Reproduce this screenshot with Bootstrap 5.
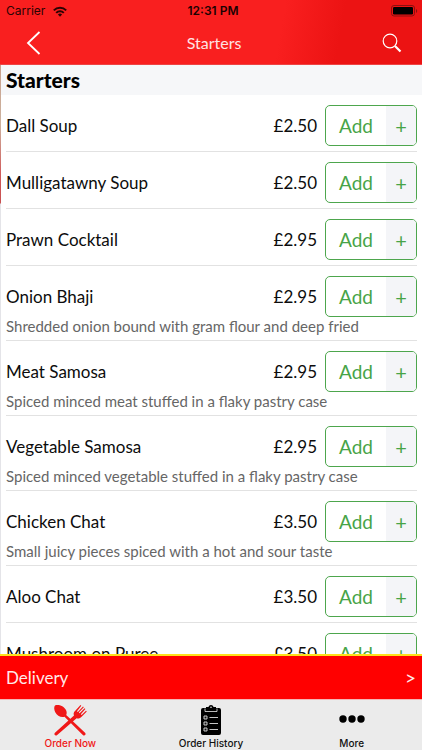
<!DOCTYPE html>
<html lang="en">
<head>
<meta charset="utf-8">
<meta name="viewport" content="width=device-width, initial-scale=1">
<title>Starters</title>
<link rel="stylesheet" href="https://cdn.jsdelivr.net/npm/bootstrap@5.3.0/dist/css/bootstrap.min.css">
<style>
body { font-family: Lato, "Liberation Sans", sans-serif; color: #0c0c0c; line-height: 20px; }
.top-bar { background: linear-gradient(100deg, #f91f1f 0%, #f91f1f 66%, #ec1313 80%, #ec1313 100%); border-bottom: 1px solid #e44; height: 65px; }
.status { display: grid; grid-template-columns: 1fr auto 1fr; font: 12px/22px Inter, sans-serif; color: #2a0303; }
.status > :first-child { padding-left: 0; margin-left: -2px; }
.status strong { font-weight: 600; color: #1c0202; }
.title-row { display: grid; grid-template-columns: 1fr auto 1fr; align-items: center; height: 42px; }
.title-row h1 { font-size: 16px; line-height: 20px; font-weight: 400; color: #ffe3e3; padding-left: 6px; }
.icon-btn { border: 0; background: none; padding: 0; line-height: 0; }
.menu { min-height: 0; overflow-y: auto; scrollbar-width: none; border-left: 1px solid; border-image: linear-gradient(#c9a08c 0, #cdb3a0 60px, #d05a5a 110px, #c85050 138px, #e4e4e8 140px, #e4e4e8 100%) 1; }
.menu::-webkit-scrollbar { display: none; }
.menu h2 { font-size: 21px; line-height: 30px; font-weight: 900; color: #000; background: #f6f7f9; padding-left: 5px; }
.dish { margin-left: 5px; margin-right: 5px; padding-top: 10px; border-bottom: 1px solid #e2e2e2; min-height: 57px; }
.dish-name, .price { font-size: 17px; }
.dish p { font-size: 15px; line-height: 18px; color: #666; padding-bottom: 5px; }
.add-btn { width: 92px; height: 41px; border: 1px solid #4da64d; border-radius: 5px; background: #fff; color: #47a447; padding: 0; overflow: hidden; font-size: 19px; }
.add-btn .plus { width: 30px; background: #f4f5f8; font-size: 20px; }
.delivery { background: #f00; border-top: 2px solid #ffe01a; color: #ffe9e9; height: 45px; font-size: 17px; padding: 0 6px; }
.delivery:hover { color: #fff; }
.delivery .arrow { font-size: 19px; }
.tabs { background: #ebebeb; border-top: 1px solid #f5b5b5; height: 51px; }
.tabs a { color: #111; font: 500 10px/12px Inter, sans-serif; padding-top: 4px; }
.tabs a.current { color: #f01818; }
</style>
<script src="https://cdn.jsdelivr.net/npm/bootstrap@5.3.0/dist/js/bootstrap.bundle.min.js"></script>
</head>
<body class="d-flex flex-column vh-100 overflow-hidden">
<header class="top-bar flex-shrink-0">
  <div class="status ps-2 pe-1">
    <span class="d-flex align-items-center gap-2">Carrier
      <svg width="14" height="11" viewBox="0 0 14 11" fill="none" stroke="#2a0303" stroke-width="2" aria-hidden="true"><path d="M.8 4.400a8.800 8.800 0 0 1 12.400 0M3.200 6.900a5.400 5.400 0 0 1 7.600 0"/><path d="M7 10.700 4.900 8.600a3 3 0 0 1 4.200 0z" fill="#2a0303" stroke="none"/></svg>
    </span>
    <strong>12:31 PM</strong>
    <span class="d-flex align-items-center justify-content-end">
      <svg width="27" height="12" viewBox="0 0 27 12" aria-hidden="true"><rect x=".5" y=".5" width="23" height="10.500" rx="2.500" fill="none" stroke="#8b1010"/><rect x="2" y="2" width="20" height="7.500" rx="1.200" fill="#000"/><path d="M25 4v4c1.600-.6 1.600-3.400 0-4z" fill="#8b1010"/></svg>
    </span>
  </div>
  <div class="title-row">
    <button class="icon-btn text-start ps-4" type="button" aria-label="Back"><svg width="18" height="26" viewBox="0 0 18 26" fill="none" stroke="#fff" stroke-width="1.800"><path d="M15.500 2 4 13l11.500 11"/></svg></button>
    <h1 class="m-0">Starters</h1>
    <button class="icon-btn text-end pe-3 me-1" type="button" aria-label="Search"><svg width="20" height="20" viewBox="0 0 20 20" fill="none" stroke="#fff"><circle cx="8" cy="8" r="6.800" stroke-width="1.200"/><path d="m13 13 5.500 5.500" stroke-width="2.200"/></svg></button>
  </div>
</header>
<main class="menu flex-grow-1">
  <h2 class="m-0">Starters</h2>
  <div class="dish"><div class="d-flex align-items-center"><span class="dish-name flex-grow-1">Dall Soup</span><span class="price me-2">£2.50</span><button class="add-btn d-flex" type="button"><span class="flex-grow-1 align-self-center">Add</span><span class="plus align-self-stretch d-flex align-items-center justify-content-center">+</span></button></div></div>
  <div class="dish"><div class="d-flex align-items-center"><span class="dish-name flex-grow-1">Mulligatawny Soup</span><span class="price me-2">£2.50</span><button class="add-btn d-flex" type="button"><span class="flex-grow-1 align-self-center">Add</span><span class="plus align-self-stretch d-flex align-items-center justify-content-center">+</span></button></div></div>
  <div class="dish"><div class="d-flex align-items-center"><span class="dish-name flex-grow-1">Prawn Cocktail</span><span class="price me-2">£2.95</span><button class="add-btn d-flex" type="button"><span class="flex-grow-1 align-self-center">Add</span><span class="plus align-self-stretch d-flex align-items-center justify-content-center">+</span></button></div></div>
  <div class="dish"><div class="d-flex align-items-center"><span class="dish-name flex-grow-1">Onion Bhaji</span><span class="price me-2">£2.95</span><button class="add-btn d-flex" type="button"><span class="flex-grow-1 align-self-center">Add</span><span class="plus align-self-stretch d-flex align-items-center justify-content-center">+</span></button></div><p class="m-0">Shredded onion bound with gram flour and deep fried</p></div>
  <div class="dish"><div class="d-flex align-items-center"><span class="dish-name flex-grow-1">Meat Samosa</span><span class="price me-2">£2.95</span><button class="add-btn d-flex" type="button"><span class="flex-grow-1 align-self-center">Add</span><span class="plus align-self-stretch d-flex align-items-center justify-content-center">+</span></button></div><p class="m-0">Spiced minced meat stuffed in a flaky pastry case</p></div>
  <div class="dish"><div class="d-flex align-items-center"><span class="dish-name flex-grow-1">Vegetable Samosa</span><span class="price me-2">£2.95</span><button class="add-btn d-flex" type="button"><span class="flex-grow-1 align-self-center">Add</span><span class="plus align-self-stretch d-flex align-items-center justify-content-center">+</span></button></div><p class="m-0">Spiced minced vegetable stuffed in a flaky pastry case</p></div>
  <div class="dish"><div class="d-flex align-items-center"><span class="dish-name flex-grow-1">Chicken Chat</span><span class="price me-2">£3.50</span><button class="add-btn d-flex" type="button"><span class="flex-grow-1 align-self-center">Add</span><span class="plus align-self-stretch d-flex align-items-center justify-content-center">+</span></button></div><p class="m-0">Small juicy pieces spiced with a hot and sour taste</p></div>
  <div class="dish"><div class="d-flex align-items-center"><span class="dish-name flex-grow-1">Aloo Chat</span><span class="price me-2">£3.50</span><button class="add-btn d-flex" type="button"><span class="flex-grow-1 align-self-center">Add</span><span class="plus align-self-stretch d-flex align-items-center justify-content-center">+</span></button></div></div>
  <div class="dish"><div class="d-flex align-items-center"><span class="dish-name flex-grow-1">Mushroom on Puree</span><span class="price me-2">£3.50</span><button class="add-btn d-flex" type="button"><span class="flex-grow-1 align-self-center">Add</span><span class="plus align-self-stretch d-flex align-items-center justify-content-center">+</span></button></div></div>
</main>
<a href="#" class="delivery flex-shrink-0 d-flex align-items-center justify-content-between text-decoration-none"><span>Delivery</span><span class="arrow">&gt;</span></a>
<nav class="tabs flex-shrink-0 row g-0 text-center">
  <a href="#" class="col current text-decoration-none d-flex flex-column align-items-center">
    <svg width="34" height="33" viewBox="0 0 34 33" aria-hidden="true"><g fill="#f01818"><path d="M2 1.500C5 0 11 2 13 6c1 2 .8 3.700.2 5L32.300 29c1 1.600-.8 3.200-2.200 2.200L11.500 12.700C8 14 4 11.500 2.400 8.500 1 5.800.8 3 2 1.500z"/><path d="M1.700 29 21 11.500c-1-2 0-3.500 1-4.500l5.500-6 .8.700-4.300 5.500.8.700L30 2.500l.8.800-5 5.200.8.700 5-5 .8.800-4.600 5.300.8.600 4.400-4.200.8.800-5.200 5.300c-1.600 1.500-3 2.200-5 1.500L3.900 31.200c-1.500 1-3.200-.7-2.200-2.200z"/></g></svg>
    <span>Order Now</span></a>
  <a href="#" class="col text-decoration-none d-flex flex-column align-items-center">
    <svg width="22" height="33" viewBox="0 0 22 33" aria-hidden="true"><path d="M3 4h3V3h2.500C9 .3 13 .3 13.500 3H16v1h3a2 2 0 0 1 2 2v23a2 2 0 0 1-2 2H3a2 2 0 0 1-2-2V6a2 2 0 0 1 2-2z"/><path d="M5 4.500v3h12v-3" fill="none" stroke="#ebebeb" stroke-width=".8"/><circle cx="11" cy="3.300" r=".8" fill="#ebebeb"/><g fill="#111" stroke="#dcdcdc" stroke-width=".9"><path d="M4 12h3v3H4zM4 18h3v3H4zM4 24h3v3H4zM9.500 13.500h8.500M9.500 19.500h8.500M9.500 25.500h8.500"/></g></svg>
    <span>Order History</span></a>
  <a href="#" class="col text-decoration-none d-flex flex-column align-items-center">
    <svg width="26" height="33" viewBox="0 0 26 33" aria-hidden="true"><circle cx="4" cy="15" r="3.700"/><circle cx="13" cy="15" r="3.700"/><circle cx="22" cy="15" r="3.700"/></svg>
    <span>More</span></a>
</nav>
</body>
</html>
